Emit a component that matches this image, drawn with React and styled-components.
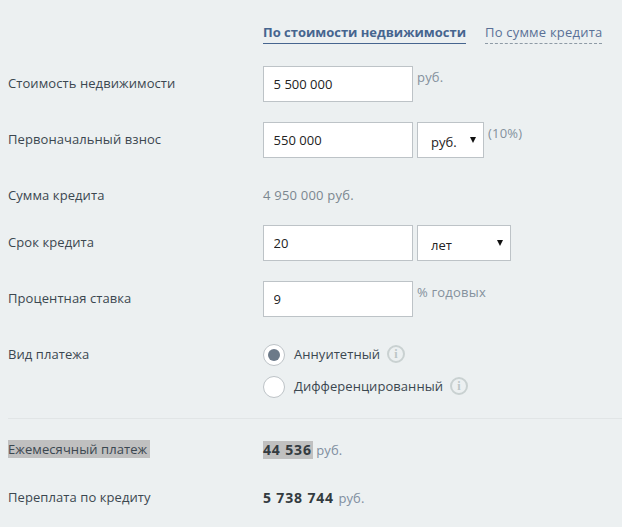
import React from "react";
import styled, { createGlobalStyle } from "styled-components";

const GlobalStyle = createGlobalStyle`
  html, body {
    margin: 0;
    padding: 0;
    background: #ecf0f1;
    font-family: "Open Sans", "DejaVu Sans", sans-serif;
    font-size: 13px;
    color: #3b4750;
    overflow: hidden;
  }
`;

const Page = styled.div`
  width: 622px;
  height: 527px;
  box-sizing: border-box;
  padding: 0 0 0 8px;
  overflow: hidden;
`;

const Tabs = styled.div`
  display: flex;
  gap: 19px;
  height: 66px;
  box-sizing: border-box;
  padding: 23px 0 0 255px;
`;

const Tab = styled.div`
  height: 21px;
  line-height: 18px;
  box-sizing: border-box;
  font-size: 13px;
  font-weight: ${(props) => (props.$active ? 700 : 400)};
  letter-spacing: ${(props) => (props.$active ? "-0.02px" : "0.2px")};
  color: ${(props) => (props.$active ? "#46658f" : "#5a7096")};
  border-bottom: 1px ${(props) => (props.$active ? "solid #46658f" : "dashed #8d9aa5")};
`;

const Row = styled.div`
  display: flex;
  height: ${(props) => props.$height || 56}px;
`;

const Label = styled.div`
  width: 255px;
  flex: none;
  line-height: 18px;
  padding-top: ${(props) => props.$top ?? 8}px;
  letter-spacing: 0.08px;
`;

const Controls = styled.div`
  display: flex;
  align-items: flex-start;
  gap: 4px;
`;

const Input = styled.input`
  width: 150px;
  height: 36px;
  box-sizing: border-box;
  border: 1px solid #bdc3c7;
  border-radius: 0;
  background: #fff;
  padding: 0 9.6px;
  font: 13px "Open Sans", sans-serif;
  color: #222;
  outline: none;
`;

const SelectBox = styled.div`
  position: relative;
  width: ${(props) => props.$width}px;
  height: 36px;
`;

const Select = styled.select`
  appearance: none;
  width: 100%;
  height: 100%;
  box-sizing: border-box;
  border: 1px solid #bdc3c7;
  border-radius: 0;
  background: #fff;
  padding: 3px 0 0 13px;
  font: 13px "Open Sans", sans-serif;
  color: #222;
  outline: none;
`;

const Arrow = styled.span`
  position: absolute;
  top: 15px;
  right: 8px;
  width: 0;
  height: 0;
  border-left: 3.5px solid transparent;
  border-right: 3.5px solid transparent;
  border-top: 6px solid #111;
  pointer-events: none;
`;

const Unit = styled.span`
  color: #84919d;
  line-height: 18px;
  padding-top: 2px;
  letter-spacing: 0.2px;
`;

const PlainValue = styled.div`
  color: #7b8790;
  line-height: 18px;
  padding-top: 8px;
  letter-spacing: 0.22px;
`;

const RadioList = styled.div`
  display: flex;
  flex-direction: column;
  gap: 10px;
`;

const RadioRow = styled.div`
  display: flex;
  align-items: center;
  height: 22px;
`;

const RadioCircle = styled.span`
  width: 22px;
  height: 22px;
  box-sizing: border-box;
  border: 1px solid #bdc3c7;
  border-radius: 50%;
  background: #fff;
  display: flex;
  align-items: center;
  justify-content: center;
  margin-right: 9px;
  &::after {
    content: "";
    display: ${(props) => (props.$checked ? "block" : "none")};
    width: 12px;
    height: 12px;
    border-radius: 50%;
    background: #6c7a89;
  }
`;

const RadioText = styled.span`
  line-height: 18px;
  margin-top: -3px;
  letter-spacing: 0.05px;
`;

const Info = styled.span`
  width: 18px;
  height: 18px;
  box-sizing: border-box;
  margin: -3px 0 0 7px;
  border: 2px solid #c9d1d1;
  border-radius: 50%;
  color: #bcc6c6;
  font: 700 12px/14px "Liberation Serif", serif;
  text-align: center;
`;

const Divider = styled.div`
  height: 1px;
  background: #e1e5e6;
  margin: 0 0 20px 0;
`;

const Marked = styled.span`
  background: #c0c0c0;
  padding: ${(props) => props.$pad || "0"};
`;

const Result = styled.div`
  line-height: 18px;
  padding-top: ${(props) => props.$top ?? 2}px;
  color: #7f8e9f;
  letter-spacing: 0.1px;
`;

const Amount = styled.strong`
  font-size: 14px;
  font-weight: 700;
  color: #333b40;
  letter-spacing: 0.85px;
  margin-right: 1px;
`;

function UnitSelect({ width, value }) {
  return (
    <SelectBox $width={width}>
      <Select defaultValue={value}>
        <option>{value}</option>
      </Select>
      <Arrow />
    </SelectBox>
  );
}

export default function App() {
  return (
    <Page>
      <GlobalStyle />
      <Tabs>
        <Tab $active>По стоимости недвижимости</Tab>
        <Tab>По сумме кредита</Tab>
      </Tabs>
      <Row>
        <Label>Стоимость недвижимости</Label>
        <Controls>
          <Input defaultValue="5 500 000" />
          <Unit>руб.</Unit>
        </Controls>
      </Row>
      <Row>
        <Label>Первоначальный взнос</Label>
        <Controls>
          <Input defaultValue="550 000" />
          <UnitSelect width={67} value="руб." />
          <Unit>(10%)</Unit>
        </Controls>
      </Row>
      <Row $height={47}>
        <Label>Сумма кредита</Label>
        <PlainValue>4 950 000 руб.</PlainValue>
      </Row>
      <Row>
        <Label>Срок кредита</Label>
        <Controls>
          <Input defaultValue="20" />
          <UnitSelect width={94} value="лет" />
        </Controls>
      </Row>
      <Row $height={63}>
        <Label>Процентная ставка</Label>
        <Controls>
          <Input defaultValue="9" />
          <Unit>% годовых</Unit>
        </Controls>
      </Row>
      <Row $height={74}>
        <Label $top={1}>Вид платежа</Label>
        <RadioList>
          <RadioRow>
            <RadioCircle $checked />
            <RadioText>Аннуитетный</RadioText>
            <Info>i</Info>
          </RadioRow>
          <RadioRow>
            <RadioCircle />
            <RadioText>Дифференцированный</RadioText>
            <Info>i</Info>
          </RadioRow>
        </RadioList>
      </Row>
      <Divider />
      <Row $height={48}>
        <Label $top={1}>
          <Marked $pad="0 3px 0 0">Ежемесячный платеж</Marked>
        </Label>
        <Result>
          <Marked><Amount>44 536</Amount></Marked> руб.
        </Result>
      </Row>
      <Row>
        <Label $top={1}>Переплата по кредиту</Label>
        <Result>
          <Amount>5 738 744</Amount> руб.
        </Result>
      </Row>
    </Page>
  );
}
